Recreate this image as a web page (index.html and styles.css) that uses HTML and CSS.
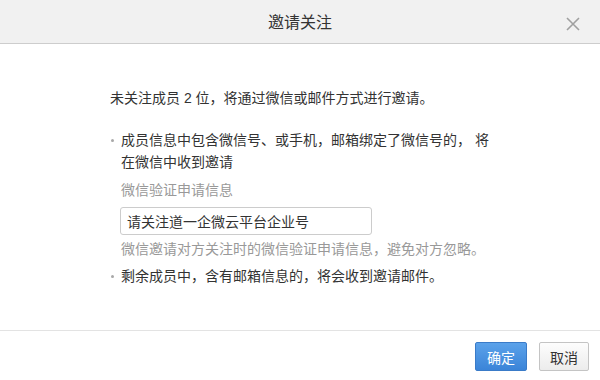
FILE: index.html
```html
<!DOCTYPE html>
<html lang="zh-CN">
<head>
    <meta charset="UTF-8">
    <meta name="viewport" content="width=device-width, initial-scale=1.0">
    <title>邀请关注</title>
    <link rel="stylesheet" href="styles.css">
</head>
<body>

    <div class="dialog">
        <!-- Title bar -->
        <div class="dialog-header">
            <span class="dialog-title">邀请关注</span>
            <button class="close-button" aria-label="关闭">
                <svg width="14" height="14" viewBox="0 0 14 14">
                    <path d="M1 1 L13 13 M13 1 L1 13" stroke="#a0a0a0" stroke-width="1.6" fill="none"/>
                </svg>
            </button>
        </div>

        <!-- Body -->
        <div class="dialog-body">
            <p class="summary">未关注成员 2 位，将通过微信或邮件方式进行邀请。</p>

            <ul class="invite-list">
                <li>
                    成员信息中包含微信号、或手机，邮箱绑定了微信号的， 将在微信中收到邀请
                    <div class="field-label">微信验证申请信息</div>
                    <input type="text" class="text-input" value="请关注道一企微云平台企业号">
                    <div class="field-hint">微信邀请对方关注时的微信验证申请信息，避免对方忽略。</div>
                </li>
                <li>剩余成员中，含有邮箱信息的，将会收到邀请邮件。</li>
            </ul>
        </div>

        <!-- Footer buttons -->
        <div class="dialog-footer">
            <button class="btn btn-primary">确定</button>
            <button class="btn">取消</button>
        </div>
    </div>

</body>
</html>
```

FILE: styles.css
```css
/* General Styles */
body {
    margin: 0;
    padding: 0;
    font-family: "Liberation Sans", "Noto Sans CJK SC", sans-serif;
    font-size: 14px;
    color: #333;
    background-color: #fff;
}

.dialog {
    display: flex;
    flex-direction: column;
    height: 100vh;
}

/* Title bar */
.dialog-header {
    position: relative;
    height: 43px;
    background-color: #f1f1f1;
    border-bottom: 1px solid #cdcdcd;
    display: flex;
    align-items: center;
    justify-content: center;
}

.dialog-title {
    font-size: 16px;
    color: #333;
    margin-top: -1px;
}

.close-button {
    position: absolute;
    right: 20px;
    top: 17px;
    padding: 0;
    border: none;
    background: transparent;
    cursor: pointer;
    line-height: 0;
}

/* Body */
.dialog-body {
    flex: 1;
    padding: 43px 0 0 110px;
    line-height: 22px;
}

.summary {
    margin: 0 0 20px;
}

.invite-list {
    list-style: none;
    margin: 0;
    padding: 0;
    width: 385px;
}

.invite-list li {
    position: relative;
    padding-left: 11px;
}

.invite-list li::before {
    content: "";
    position: absolute;
    left: 1px;
    top: 10px;
    width: 3px;
    height: 3px;
    border-radius: 50%;
    background-color: #a8a8a8;
}

.field-label {
    margin-top: 6px;
    color: #999;
}

.text-input {
    display: block;
    box-sizing: border-box;
    width: 252px;
    height: 28px;
    margin: 6px 0 0 -1px;
    padding: 0 6px;
    border: 1px solid #ccc;
    border-radius: 3px;
    font-family: inherit;
    font-size: 14px;
    color: #333;
    outline: none;
}

.field-hint {
    margin: 3px 0 5px;
    color: #999;
    white-space: nowrap;
}

/* Footer */
.dialog-footer {
    display: flex;
    justify-content: flex-end;
    gap: 12px;
    padding: 11px 11px 9px;
    border-top: 1px solid #e3e3e3;
}

.btn {
    height: 29px;
    padding: 0 10px;
    border: 1px solid #c4c4c4;
    border-radius: 2px;
    background: linear-gradient(#fdfdfd, #ececec);
    font-family: inherit;
    font-size: 14px;
    color: #333;
    cursor: pointer;
}

.btn-primary {
    border-color: #3a7bc8;
    background: linear-gradient(#5ba2ea, #3b84d8);
    color: #fff;
    padding: 0 11px;
}
```
